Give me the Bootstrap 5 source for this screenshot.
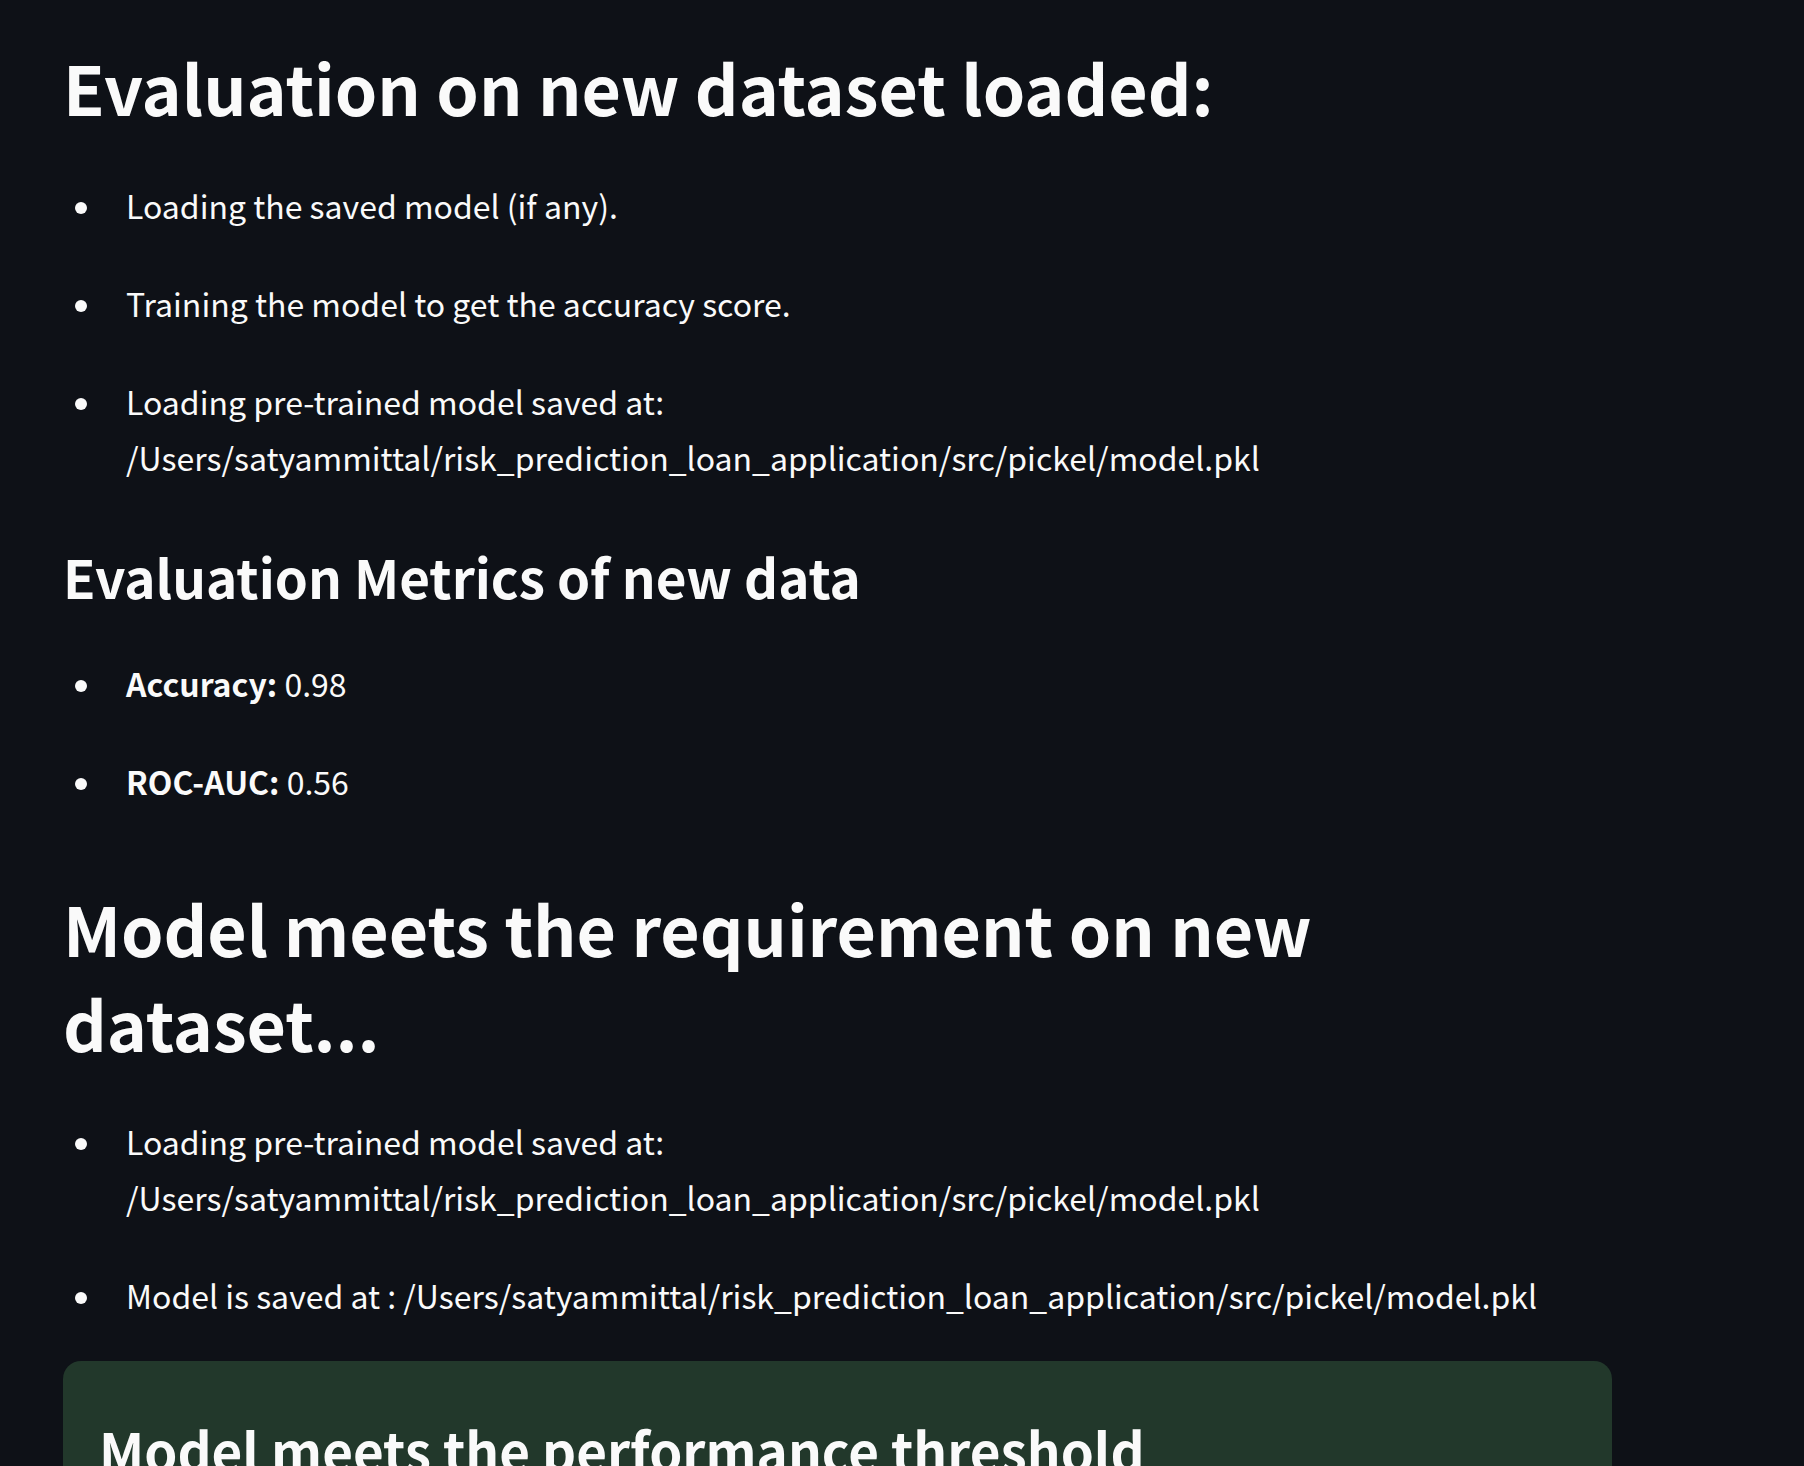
<!DOCTYPE html>
<html lang="en" data-bs-theme="dark">
<head>
<meta charset="utf-8">
<meta name="viewport" content="width=device-width, initial-scale=1">
<title>Model evaluation</title>
<link href="https://cdn.jsdelivr.net/npm/bootstrap@5.3.0/dist/css/bootstrap.min.css" rel="stylesheet">
<style>
body{background:#0e1117;color:#fafafa;font-family:"Noto Sans CJK SC","Noto Sans",sans-serif;font-size:32px;line-height:56px}
.report{padding:39px 192px 0 63px}
h1,h2{font-weight:700;color:#fafafa}
h1{font-size:68px;line-height:95px;margin:71px 0 43px}
h2{font-size:53px;line-height:70px;margin:56px 0 44px}
.report>h1:first-child{margin-top:0}
.notes{padding-left:63px}
.notes li{position:relative;margin-bottom:42px}
.notes li:last-child{margin-bottom:0}
.notes li::before{content:"";position:absolute;left:-51px;top:25px;width:12px;height:12px;border-radius:50%;background:#fafafa}
.result{background:#22382b;border-radius:18px;padding:53px 36px 36px;margin-top:38px}
</style>
<script src="https://cdn.jsdelivr.net/npm/bootstrap@5.3.0/dist/js/bootstrap.bundle.min.js"></script>
</head>
<body>
<main class="report">
<h1>Evaluation on new dataset loaded:</h1>
<ul class="notes list-unstyled mb-0">
<li>Loading the saved model (if any).</li>
<li>Training the model to get the accuracy score.</li>
<li>Loading pre-trained model saved at: /Users/satyammittal/risk_prediction_loan_application/src/pickel/model.pkl</li>
</ul>
<h2>Evaluation Metrics of new data</h2>
<ul class="notes list-unstyled mb-0">
<li><strong>Accuracy:</strong> 0.98</li>
<li><strong>ROC-AUC:</strong> 0.56</li>
</ul>
<h1>Model meets the requirement on new dataset...</h1>
<ul class="notes list-unstyled mb-0">
<li>Loading pre-trained model saved at: /Users/satyammittal/risk_prediction_loan_application/src/pickel/model.pkl</li>
<li>Model is saved at : /Users/satyammittal/risk_prediction_loan_application/src/pickel/model.pkl</li>
</ul>
<section class="result"><h2 class="m-0">Model meets the performance threshold</h2></section>
</main>
</body>
</html>
